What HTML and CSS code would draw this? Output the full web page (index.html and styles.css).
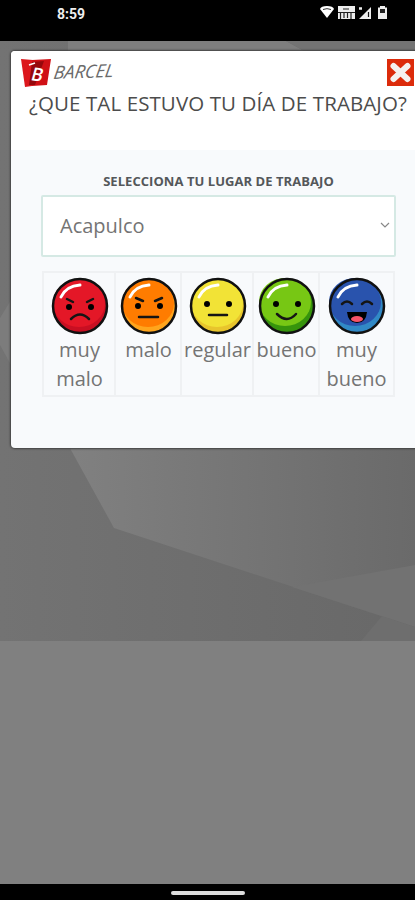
FILE: index.html
```html
<!DOCTYPE html>
<html lang="es">
<head>
<meta charset="utf-8">
<title>Barcel</title>
<link rel="stylesheet" href="styles.css">
</head>
<body>
<header class="status">
  <span class="clock">8:59</span>
  <svg class="status-icons" width="70" height="16" viewBox="0 0 70 16">
    <path d="M0 4Q1 1 7 1T14 4L7 13Z" fill="#fff"/>
    <path d="M3 4.500Q7 2.800 11 4.500" fill="none" stroke="#333" stroke-width="1"/>
    <rect x="18" y="1" width="17" height="13" fill="#eee"/>
    <path d="M18 7.500H35M20.500 8V14M24 8V13M27.500 8V13M31 8V14M23 4H29" stroke="#222" stroke-width="1.200"/>
    <path d="M39 14L51 2V14Z" fill="#eee"/>
    <path d="M39 3.500H42" stroke="#eee" stroke-width="2.500"/>
    <path d="M48.500 7V12" stroke="#111" stroke-width="1.200"/>
    <path d="M60 2.500V1H65V2.500H67V14H58V2.500Z" fill="#eee"/>
    <rect x="60" y="4" width="5" height="4" fill="#222"/>
  </svg>
</header>
<main class="page">
  <svg class="backdrop" width="415" height="600" viewBox="0 41 415 600">
    <defs>
      <linearGradient id="base"><stop stop-color="#737373"/><stop offset="1" stop-color="#686868"/></linearGradient>
      <linearGradient id="facet"><stop stop-color="#818181"/><stop offset="1" stop-color="#6a6a6a"/></linearGradient>
    </defs>
    <rect y="41" width="415" height="600" fill="url(#base)"/>
    <path d="M68 41H286L330 65H68Z" fill="#7e7e7e"/>
    <path d="M286 41H415V65H330Z" fill="#737373"/>
    <path d="M0 318L11 300V365L0 345Z" fill="#7c7c7c"/>
    <path d="M60 430L114 528L415 627V430Z" fill="url(#facet)"/>
    <path d="M292 587L415 565V627Z" fill="#727272"/>
    <path d="M382 616L415 627V641H361Z" fill="#6e6e6e"/>
  </svg>
  <section class="modal">
    <div class="modal-head">
      <div class="brand-row">
        <svg class="logo" width="110" height="30" viewBox="0 0 110 30">
          <path d="M1 1L13 2L12 28L5 29Z" fill="#dc171c"/>
          <path d="M12 2L31 1L27 27L12 28Z" fill="#d01015"/>
          <path d="M12 4L24 3L15 27L9 27Z" fill="#96080c"/>
          <path d="M9 7L15 5" fill="none" stroke="#fff" stroke-width="1.500"/>
          <text class="logo-letter" transform="translate(10 22) skewX(-8) rotate(8)">B</text>
          <text class="logo-name" transform="translate(33 21) rotate(-2) skewX(-10)" textLength="60" lengthAdjust="spacingAndGlyphs">BARCEL</text>
        </svg>
        <button class="close" aria-label="Cerrar">
          <svg width="27" height="27" viewBox="0 0 27 27"><rect width="27" height="27" fill="#dc2b0b"/><path d="M6.500 7L20.500 20M20.500 7L6.500 20" stroke="#f5f1ef" stroke-width="6" stroke-linecap="round"/></svg>
        </button>
      </div>
      <h1>¿QUE TAL ESTUVO TU DÍA DE TRABAJO?</h1>
    </div>
    <div class="modal-body">
      <h2>SELECCIONA TU LUGAR DE TRABAJO</h2>
      <div class="select"><span>Acapulco</span><svg width="10" height="6" viewBox="0 0 10 6"><path d="M1 1L5 5L9 1" fill="none" stroke="#888" stroke-width="1.200"/></svg></div>
      <div class="ratings">
        <div class="rating">
          <svg width="58" height="58" viewBox="-29 -29 58 58"><circle r="27" fill="#c90f22"/><ellipse cx="-1" cy="-3" rx="26" ry="24" fill="#e41727"/><circle r="27" class="rim"/><path class="shine" d="M-19 -9Q-14 -20 0 -21"/><circle cx="-11" cy="1" r="3"/><circle cx="11" cy="1" r="3"/><path class="line" d="M-13 -7L-7 -4M13 -7L7 -4M-9 13Q0 4 9 13"/></svg>
          <span>muy malo</span>
        </div>
        <div class="rating">
          <svg width="58" height="58" viewBox="-29 -29 58 58"><circle r="27" fill="#ffa51c"/><ellipse cx="-1" cy="-3" rx="26" ry="24" fill="#ff7c00"/><circle r="27" class="rim"/><path class="shine" d="M-19 -9Q-14 -20 0 -21"/><circle cx="-11" cy="0" r="3"/><circle cx="11" cy="0" r="3"/><path class="line" d="M-13 -8L-6 -5M13 -8L6 -5M-10 11H9"/></svg>
          <span>malo</span>
        </div>
        <div class="rating">
          <svg width="58" height="58" viewBox="-29 -29 58 58"><circle r="27" fill="#e8c52c"/><ellipse cx="-1" cy="-3" rx="26" ry="24" fill="#f2e336"/><circle r="27" class="rim"/><path class="shine" d="M-19 -9Q-14 -20 0 -21"/><circle cx="-11" cy="-2" r="3"/><circle cx="11" cy="-2" r="3"/><path class="line" d="M-9 9H9"/></svg>
          <span>regular</span>
        </div>
        <div class="rating">
          <svg width="58" height="58" viewBox="-29 -29 58 58"><circle r="27" fill="#36940c"/><ellipse cx="-2" cy="-4" rx="26" ry="24" fill="#77c714"/><circle r="27" class="rim"/><path class="shine" d="M-19 -9Q-14 -20 0 -21"/><circle cx="-11" cy="-2" r="3"/><circle cx="11" cy="-2" r="3"/><path class="line" d="M-10 8Q0 18 9 8"/></svg>
          <span>bueno</span>
        </div>
        <div class="rating">
          <svg width="58" height="58" viewBox="-29 -29 58 58"><circle r="27" fill="#3189c6"/><ellipse cx="-2" cy="-4" rx="26" ry="24" fill="#2953ad"/><circle r="27" class="rim"/><path class="shine" d="M-19 -9Q-14 -20 0 -21"/><path class="line" d="M-15 -2Q-10 -7 -5 -2M5 -2Q10 -7 15 -2"/><path d="M-10 6H10Q9 17 0 17T-10 6Z"/><ellipse cy="13" rx="6" ry="3" fill="#f65369"/></svg>
          <span>muy bueno</span>
        </div>
      </div>
    </div>
  </section>
</main>
<footer class="navbar"><div class="pill"></div></footer>
</body>
</html>
```
FILE: styles.css
```css
* { box-sizing: border-box; }
body {
  margin: 0;
  width: 415px;
  height: 900px;
  overflow: hidden;
  display: flex;
  flex-direction: column;
  background: #808080;
  font-family: "Open Sans", sans-serif;
}
.status {
  height: 41px;
  flex: none;
  display: flex;
  justify-content: space-between;
  padding: 5px 25px 0 57px;
  background: #000;
}
.clock { color: #eee; font: 700 14px/18px Roboto, sans-serif; }
.page { position: relative; flex: 1; padding: 10px 0 0 11px; overflow: hidden; }
.backdrop { position: absolute; left: 0; top: 0; }
.modal {
  position: relative;
  width: 414px;
  height: 397px;
  border-radius: 4px;
  overflow: hidden;
  background: #f8fafc;
  box-shadow: 0 0 2px 1px #404040;
}
.modal-head { height: 99px; padding: 7px 0 0 9px; background: #fff; }
.brand-row { display: flex; height: 31px; width: 394px; justify-content: space-between; }
.logo-letter { font: 600 18px "Open Sans", sans-serif; fill: #fff; }
.logo-name { font: italic 400 18px "Open Sans", sans-serif; fill: #6a6a6a; }
.close { width: 27px; height: 27px; margin: 1px 0 0; padding: 0; border: 0; background: none; }
.close svg { display: block; }
h1 {
  margin: 0 0 0 9px;
  color: #4c4c4c;
  font-size: 20.5px;
  letter-spacing: 0.1px;
  font-weight: 400;
  line-height: 28px;
  white-space: nowrap;
}
.modal-body { padding: 21px 0 0 30px; width: 385px; }
h2 {
  margin: 0;
  color: #54575a;
  font-size: 13px;
  letter-spacing: 0.05px;
  font-weight: 700;
  line-height: 20px;
  text-align: center;
}
.select {
  display: flex;
  align-items: center;
  justify-content: space-between;
  height: 62px;
  margin-top: 4px;
  padding: 0 4px 2px 17px;
  border: 2px solid #d5e9e4;
  border-radius: 2px;
  background: #fff;
  color: #747474;
  font-size: 20px;
}
.ratings {
  display: grid;
  grid-template-columns: 71px 66px 72px 66px 74px;
  width: 353px;
  height: 126px;
  margin: 14px 0 0 1px;
  border: 2px solid #eff1f3;
}
.rating {
  display: flex;
  flex-direction: column;
  align-items: center;
  padding-top: 4px;
  color: #747474;
  font-size: 20px;
  line-height: 29px;
  text-align: center;
}
.rating + .rating { border-left: 2px solid #eff1f3; margin-left: -1px; }
.rating svg { flex: none; }
.rim { fill: none; stroke: #111; stroke-width: 2.5; }
.shine { fill: none; stroke: #fff; stroke-width: 3; stroke-linecap: round; }
.line { fill: none; stroke: #151515; stroke-width: 2.5; stroke-linecap: round; }
.navbar { height: 16px; flex: none; display: flex; justify-content: center; padding-top: 7px; background: #000; }
.pill { width: 74px; height: 4px; border-radius: 2px; background: #ddd; }
```
